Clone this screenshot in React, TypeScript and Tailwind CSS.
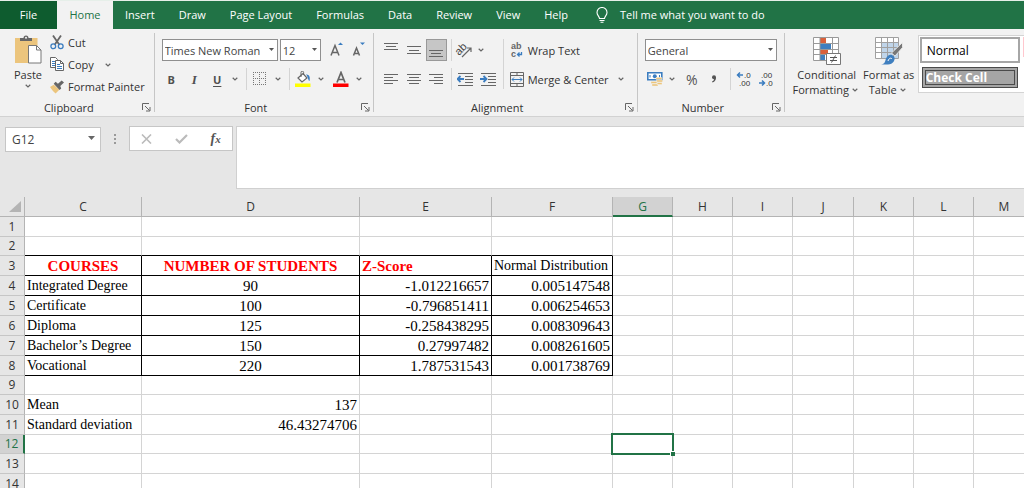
import React from "react";
import clsx from "clsx";

const tabs = ["Insert", "Draw", "Page Layout", "Formulas", "Data", "Review", "View", "Help"];

const columns = [
  { name: "C", width: 117 },
  { name: "D", width: 218 },
  { name: "E", width: 132 },
  { name: "F", width: 121 },
  { name: "G", width: 60 },
  { name: "H", width: 60 },
  { name: "I", width: 60 },
  { name: "J", width: 61 },
  { name: "K", width: 60 },
  { name: "L", width: 60 },
  { name: "M", width: 61 },
];

const cells: Record<number, string[]> = {
  3: ["COURSES", "NUMBER OF STUDENTS", "Z-Score", "Normal Distribution"],
  4: ["Integrated Degree", "90", "-1.012216657", "0.005147548"],
  5: ["Certificate", "100", "-0.796851411", "0.006254653"],
  6: ["Diploma", "125", "-0.258438295", "0.008309643"],
  7: ["Bachelor’s Degree", "150", "0.27997482", "0.008261605"],
  8: ["Vocational", "220", "1.787531543", "0.001738769"],
  10: ["Mean", "137"],
  11: ["Standard deviation", "46.43274706"],
};

const rows = Array.from({ length: 14 }, (_, i) => i + 1);
const shortRows = [2, 9, 12];

const Chevron = () => (
  <svg width="12" height="8" viewBox="0 0 12 8" fill="none" stroke="#666" strokeWidth="1.2" className="shrink-0">
    <path d="M3.700 2.800 6 5l2.300-2.200" />
  </svg>
);

const Sep = ({ className }: { className?: string }) => (
  <div className={clsx("w-px shrink-0 self-stretch bg-[#d4d4d4]", className)} />
);

const Tool = ({
  label,
  className,
  children,
}: {
  label: string;
  className?: string;
  children: React.ReactNode;
}) => (
  <button aria-label={label} className={clsx("flex h-[22px] shrink-0 items-center justify-center", className)}>
    {children}
  </button>
);

const Combo = ({ label, value, className }: { label: string; value: string; className: string }) => (
  <div className={clsx("relative h-[22px]", className)}>
    <select
      aria-label={label}
      className="h-full w-full appearance-none border border-[#8f8f8f] bg-white pl-[2px] text-[11px] text-[#444]"
    >
      <option>{value}</option>
    </select>
    <svg width="5" height="3" viewBox="0 0 5 3" className="pointer-events-none absolute top-[9px] right-1">
      <path d="M0 0h5L2.500 3z" fill="#555" />
    </svg>
  </div>
);

const Group = ({
  title,
  className,
  children,
}: {
  title: string;
  className?: string;
  children: React.ReactNode;
}) => (
  <section aria-label={title} className="relative flex shrink-0 flex-col">
    <div className={clsx("flex h-[70px] items-start", className)}>{children}</div>
    <div className="flex h-4 items-center pr-1">
      <span className="flex-1 pr-1 text-center">{title}</span>
      <button aria-label={`${title} settings`}>
        <svg width="9" height="9" viewBox="0 0 9 9" fill="none" stroke="#666">
          <path d="M.5 7V.5H7M3 3l4.500 4.500M8 4v4H4" />
        </svg>
      </button>
    </div>
    <div className="absolute top-1 right-0 bottom-1 w-px bg-[#c6c6c6]" />
  </section>
);

const Lines = ({ rows }: { rows: [number, number, number][] }) => (
  <svg width="16" height="16" viewBox="0 0 16 16" stroke="#666">
    {rows.map(([x1, x2, y]) => (
      <path key={y} d={`M${x1} ${y}.5H${x2}`} />
    ))}
  </svg>
);

const PasteIcon = () => (
  <svg width="28" height="29" viewBox="0 0 28 29">
    <path d="M1 3h22.500v25H1z" fill="#ecc57d" />
    <path d="M6 6V3h3.500a2.500 2.500 0 0 1 5 0H18v3z" fill="#666" />
    <circle cx="12" cy="2.800" r="1" fill="#f2f2f2" />
    <path d="M14.500 10.500h8l4.500 4.500v13H14.500z" fill="#fff" stroke="#777" />
    <path d="M22.500 10.500V15H27" fill="none" stroke="#777" />
  </svg>
);

const CutIcon = () => (
  <svg width="14" height="15" viewBox="0 0 14 15" fill="none">
    <path d="M3 .5 9.500 10M11 .5 4.500 10" stroke="#666" strokeWidth="1.800" />
    <circle cx="3.300" cy="11.300" r="2.400" stroke="#3b7dc0" strokeWidth="1.300" />
    <circle cx="10.700" cy="11.300" r="2.400" stroke="#3b7dc0" strokeWidth="1.300" />
  </svg>
);

const CopyIcon = () => (
  <svg width="14" height="15" viewBox="0 0 14 15" fill="#fff" stroke="#666">
    <path d="M.5.5h5l2 2v8h-7z" />
    <path d="M2 4.500h3M2 6.500h3M2 8.500h3" stroke="#3b7dc0" />
    <path d="M5.500 3.500h5l3 3v7h-8z" />
    <path d="M10.500 3.500v3h3" fill="none" />
    <path d="M7 7.500h3M7 9.500h5M7 11.500h5" stroke="#3b7dc0" />
  </svg>
);

const PainterIcon = () => (
  <svg width="14" height="14" viewBox="0 0 15 14">
    <path d="M0 7 4 4.500l6 5.500-4 4C4 12 2.500 11 0 7z" fill="#ecc57d" />
    <path d="m4 3.500 2-2 2.500 2L12.500 0 15 2.300 11 6l1 2.500-1.800 1.800z" fill="#666" />
  </svg>
);

const BordersIcon = () => (
  <svg width="14" height="14" viewBox="0 0 14 14" stroke="#777" strokeDasharray="1 1" fill="none">
    <path d="M0 .5h14M0 6.500h14M0 12.500h14M.5 0v14M6.500 0v14M12.500 0v14" />
  </svg>
);

const FillIcon = () => (
  <svg width="16" height="16" viewBox="0 0 16 16">
    <path d="m3 7 5-4.500 4 4.500-5 4z" fill="#fff" stroke="#666" strokeWidth="1.200" />
    <path d="M6 6V1.500a1.300 1.300 0 0 1 2.600 0V4" fill="none" stroke="#666" />
    <path d="M11 3.500c3 0 4.500 2 3.500 6.500-1.500-.5-1-3.500-3.500-6.500z" fill="#3b7dc0" />
    <path d="M0 12.500h15.500V16H0z" fill="#ffff00" />
  </svg>
);

const OrientationIcon = () => (
  <svg width="16" height="15" viewBox="0 0 16 15" className="overflow-visible">
    <text x="0" y="10" transform="rotate(-45 5 8)" fontSize="11" fill="#444" fontFamily="Liberation Sans">
      ab
    </text>
    <path d="M6 14 14.500 5.500M11 5h4v4" fill="none" stroke="#666" strokeWidth="1.200" />
  </svg>
);

const IndentIcon = ({ right }: { right?: boolean }) => (
  <svg width="16" height="14" viewBox="0 0 16 14" fill="none">
    <path d="M1 1.500h15M8 4.500h8M8 7.500h8M8 10.500h8M1 13.500h15" stroke="#666" />
    <path
      d={right ? "M0 7h6.500M3.500 4l3 3-3 3" : "M.5 7H7M3.500 4l-3 3 3 3"}
      stroke="#3b7dc0"
      strokeWidth="1.800"
    />
  </svg>
);

const WrapIcon = () => (
  <svg
    width="14"
    height="16"
    viewBox="0 0 14 16"
    fontFamily="Liberation Sans"
    fontSize="9"
    fontWeight="700"
    fill="#666"
    className="overflow-visible"
  >
    <text x="1" y="7">ab</text>
    <text x="1" y="15">c</text>
    <path d="M11.500 10v2.500H8M9.500 10.500l-2 2 2 2" fill="none" stroke="#3b7dc0" strokeWidth="1.300" />
  </svg>
);

const MergeIcon = () => (
  <svg width="14" height="15" viewBox="0 0 14 15" fill="none" stroke="#666">
    <path d="M.5.5h13v14H.5zM.5 3.500h13M.5 11.500h13M7 .5v3M7 11.500v3" />
    <path d="M2 7.500h10M4 5.500l-2 2 2 2M10 5.500l2 2-2 2" stroke="#3b7dc0" />
  </svg>
);

const MoneyIcon = () => (
  <svg width="16" height="16" viewBox="0 0 16 16">
    <path d="M.8 1.800h14v7H.8z" fill="#fff" stroke="#3b7dc0" strokeWidth="1.600" />
    <circle cx="7.800" cy="5.300" r="2" fill="#3b7dc0" />
    <path d="M3 4v2.500M12.500 4v2.500" stroke="#3b7dc0" />
    <path
      d="M4 10.500h6v2H4zM5 13h6v2H5zM9 6.500h6v2H9zM9.500 9h6v2h-6zM10 11.500h5v2h-5z"
      fill="#ecc57d"
      stroke="#f2f2f2"
      strokeWidth=".4"
    />
  </svg>
);

const DecimalIcon = ({ increase }: { increase?: boolean }) => (
  <svg
    width="16"
    height="16"
    viewBox="0 0 16 16"
    fontFamily="Liberation Sans"
    fontSize="8"
    fill="#333"
    className="overflow-visible"
  >
    <text x={increase ? 8 : 3} y="7">{increase ? ".0" : ".00"}</text>
    <text x={increase ? 3 : 8} y="15">{increase ? ".00" : ".0"}</text>
    <path
      d={increase ? "M7 4H1.500M4 1.500 1.500 4 4 6.500" : "M1 12h5.500M4 9.500 6.500 12 4 14.500"}
      fill="none"
      stroke="#3b7dc0"
      strokeWidth="1.500"
    />
  </svg>
);

const ConditionalIcon = () => (
  <svg width="28" height="29" viewBox="0 0 28 29">
    <path d="M.5.5h25v23H.5z" fill="#fff" />
    <path d="M7 1h6v5H7zM7 12h8v6H7z" fill="#d9603b" />
    <path d="M7 6h11v6H7zM7 18h5v5H7z" fill="#3f7fbf" />
    <path d="M.5.5h25v23H.5zM7 .5v23M19.500 .5v23M.5 6.500h25M.5 12.500h25M.5 17.500h25" fill="none" stroke="#999" />
    <path d="M13.500 16.500h14v11h-14z" fill="#fff" stroke="#777" />
    <path d="M17 20.500h7M17 23.500h7M22.500 18.500l-4 7" stroke="#555" fill="none" />
  </svg>
);

const TableIcon = () => (
  <svg width="28" height="28" viewBox="0 0 28 28">
    <path d="M.5.5h23v21H.5z" fill="#fff" />
    <path d="M6 5.500h17.500v16H6z" fill="#c0d5ea" />
    <path d="M.5.5h23v21H.5zM6.500.5v21M12.500.5v21M18.500.5v21M.5 5.500h23M.5 10.500h23M.5 15.500h23" fill="none" stroke="#a0a0a0" />
    <path d="M27.500 5.500v5L20 19l-3.500-3z" fill="#777" stroke="#f2f2f2" strokeWidth=".8" />
    <path d="M6 27.500c4-.5 4-3 5-6 1.500-4 5.500-5 8-2 2 3-1 8-6 8z" fill="#3f7fbf" />
    <path d="M13 24c1-3 3-3.500 4-2" stroke="#fff" fill="none" />
  </svg>
);

const Ribbon = () => (
  <div className="flex h-[88px] shrink-0 border-b border-[#d2d2d2] bg-[#f2f2f2] text-[11px] leading-[15px] text-[#333]">
    <Group title="Clipboard" className="gap-2 pt-[6px] pr-[10px] pl-[14px]">
      <button className="flex w-7 flex-col items-center">
        <PasteIcon />
        <span className="mt-[3px]">Paste</span>
        <Chevron />
      </button>
      <div className="flex flex-col items-start gap-[7px]">
        <button className="flex items-center gap-1">
          <CutIcon />
          Cut
        </button>
        <button className="flex items-center gap-1">
          <CopyIcon />
          Copy
          <span className="pl-1">
            <Chevron />
          </span>
        </button>
        <button className="flex items-center gap-1 whitespace-nowrap">
          <PainterIcon />
          Format Painter
        </button>
      </div>
    </Group>

    <Group title="Font" className="w-[219px] flex-col gap-[7px] pt-[10px]">
      <div className="flex w-full pl-[7px]">
        <Combo label="Font name" value="Times New Roman" className="w-[116px]" />
        <Combo label="Font size" value="12" className="ml-[2px] w-[41px]" />
        <Tool label="Increase font size" className="ml-1 w-[22px]">
          <svg width="16" height="16" viewBox="0 0 16 16">
            <path d="m3 13.500 4-10 4 10M4.500 10.500h5" fill="none" stroke="#666" strokeWidth="1.500" />
            <path d="m10 3 2.500-2.500L15 3z" fill="#3b7dc0" />
          </svg>
        </Tool>
        <Tool label="Decrease font size" className="w-[22px]">
          <svg width="16" height="16" viewBox="0 0 16 16">
            <path d="m3.500 13.500 3-7.500 3 7.500M4.500 11.500h4" fill="none" stroke="#666" strokeWidth="1.500" />
            <path d="m10 .5 2.500 2.500L15 .5z" fill="#3b7dc0" />
          </svg>
        </Tool>
      </div>
      <div className="flex items-center pl-[5px] text-[#505050]">
        <Tool label="Bold" className="w-[23px]">
          <b>B</b>
        </Tool>
        <Tool label="Italic" className="w-[23px]">
          <i className="font-['Liberation_Serif'] text-[13px] font-bold">I</i>
        </Tool>
        <Tool label="Underline" className="w-[23px]">
          <span className="font-bold underline underline-offset-2">U</span>
        </Tool>
        <Chevron />
        <Sep className="mx-[5px]" />
        <Tool label="Borders" className="w-4">
          <BordersIcon />
        </Tool>
        <span className="pl-1">
          <Chevron />
        </span>
        <Sep className="mx-[5px]" />
        <Tool label="Fill color" className="w-4">
          <FillIcon />
        </Tool>
        <span className="pl-1">
          <Chevron />
        </span>
        <Tool label="Font color" className="ml-[6px] w-4">
          <svg width="16" height="16" viewBox="0 0 16 16">
            <path d="m4 11.500 4-10 4 10M5.500 8.500h5" fill="none" stroke="#666" strokeWidth="1.700" />
            <path d="M0 12.500h15.500V16H0z" fill="#f00" />
          </svg>
        </Tool>
        <span className="pl-1">
          <Chevron />
        </span>
      </div>
    </Group>

    <Group title="Alignment" className="w-[264px] pt-[10px] pl-[6px]">
      <div className="flex flex-col gap-[7px]">
        <div className="flex items-center">
          <Tool label="Top align" className="w-[23px]">
            <Lines rows={[[1, 15, 1], [3, 13, 4], [1, 15, 7]]} />
          </Tool>
          <Tool label="Middle align" className="w-[23px]">
            <Lines rows={[[1, 15, 4], [3, 13, 8], [1, 15, 11]]} />
          </Tool>
          <Tool label="Bottom align" className="w-[21px] border border-[#999] bg-[#c6c6c6]">
            <Lines rows={[[1, 15, 8], [3, 13, 11], [1, 15, 14]]} />
          </Tool>
          <Sep className="mr-[2px] ml-1" />
          <Tool label="Orientation" className="w-[21px]">
            <OrientationIcon />
          </Tool>
          <Chevron />
        </div>
        <div className="flex items-center">
          <Tool label="Align left" className="w-[23px]">
            <Lines rows={[[1, 15, 3], [1, 10, 6], [1, 15, 9], [1, 10, 12]]} />
          </Tool>
          <Tool label="Center" className="w-[23px]">
            <Lines rows={[[1, 15, 3], [3, 13, 6], [1, 15, 9], [3, 13, 12]]} />
          </Tool>
          <Tool label="Align right" className="w-[21px]">
            <Lines rows={[[1, 15, 3], [6, 15, 6], [1, 15, 9], [6, 15, 12]]} />
          </Tool>
          <Sep className="mr-[2px] ml-1" />
          <Tool label="Decrease indent" className="w-[23px]">
            <IndentIcon />
          </Tool>
          <Tool label="Increase indent" className="w-[23px]">
            <IndentIcon right />
          </Tool>
        </div>
      </div>
      <Sep className="mr-[6px] mb-[10px] ml-[3px]" />
      <div className="flex flex-col gap-[7px]">
        <button className="flex h-[22px] items-center gap-1">
          <WrapIcon />
          Wrap Text
        </button>
        <button className="flex h-[22px] items-center gap-1 whitespace-nowrap">
          <MergeIcon />
          Merge &amp; Center
          <span className="pl-[2px]">
            <Chevron />
          </span>
        </button>
      </div>
    </Group>

    <Group title="Number" className="w-[147px] flex-col gap-[7px] pt-[10px] pl-[7px]">
      <Combo label="Number format" value="General" className="w-[132px]" />
      <div className="flex items-center pl-[2px]">
        <Tool label="Accounting format" className="w-4">
          <MoneyIcon />
        </Tool>
        <span className="pl-[3px]">
          <Chevron />
        </span>
        <Tool label="Percent style" className="ml-[3px] w-[22px]">
          <span className="text-[14px] text-[#555]">%</span>
        </Tool>
        <Tool label="Comma style" className="w-[22px]">
          <svg width="6" height="8" viewBox="0 0 6 8" fill="#555">
            <circle cx="3" cy="2.300" r="2" />
            <path d="M5 2.500C5 5 4 6.500 1.500 7.500L1 6.500c1.500-.5 2-1.500 2-2.500z" />
          </svg>
        </Tool>
        <Sep className="mx-[5px]" />
        <Tool label="Increase decimal" className="w-4">
          <DecimalIcon increase />
        </Tool>
        <Tool label="Decrease decimal" className="ml-[6px] w-4">
          <DecimalIcon />
        </Tool>
      </div>
    </Group>

    <section aria-label="Styles" className="flex min-w-0 flex-1 items-start overflow-hidden pt-[6px] pl-2">
      <button className="flex w-[68px] shrink-0 flex-col items-center whitespace-nowrap">
        <span className="flex h-8 items-center">
          <ConditionalIcon />
        </span>
        <span>Conditional</span>
        <span className="flex items-center">
          Formatting <Chevron />
        </span>
      </button>
      <button className="flex w-14 shrink-0 flex-col items-center whitespace-nowrap">
        <span className="flex h-8 items-center">
          <TableIcon />
        </span>
        <span>Format as</span>
        <span className="flex items-center">
          Table <Chevron />
        </span>
      </button>
      <div className="ml-px flex h-[58px] min-w-0 flex-1 border border-r-0 border-[#d4d4d4] bg-white pt-px text-[12px]">
        <div className="flex min-w-0 flex-1 flex-col gap-1 pl-px">
          <button className="h-[26px] border-2 border-[#a6a6a6] bg-white pl-[5px] text-left text-black">Normal</button>
          <button className="mx-[2px] h-[21px] border-4 border-double border-[#4a4a4a] bg-[#a5a5a5] text-left leading-[12px] font-bold text-white">
            Check Cell
          </button>
        </div>
        <div className="ml-[3px] h-5 w-px self-start bg-[#ffc7ce]" />
      </div>
    </section>
  </div>
);

const FormulaBar = () => (
  <div className="flex h-20 shrink-0 items-start pt-[9px] pl-[5px]">
    <div className="relative h-[25px] w-24">
      <input
        aria-label="Name box"
        defaultValue="G12"
        className="h-full w-full border border-[#c6c6c6] bg-white px-[6px] text-[12px] text-[#444]"
      />
      <svg width="7" height="4" viewBox="0 0 7 4" className="pointer-events-none absolute top-[10px] right-[6px]">
        <path d="M0 0h7L3.500 4z" fill="#666" />
      </svg>
    </div>
    <svg width="28" height="25" viewBox="0 0 28 25" fill="#999">
      <path d="M13 8h2v2h-2zM13 12h2v2h-2zM13 16h2v2h-2z" />
    </svg>
    <div className="flex h-[25px] w-[104px] items-center justify-around border border-[#c6c6c6] bg-white">
      <button aria-label="Cancel">
        <svg width="11" height="10" viewBox="0 0 11 10" stroke="#bbb" strokeWidth="1.600">
          <path d="m1 .5 9 9M10 .5l-9 9" />
        </svg>
      </button>
      <button aria-label="Enter">
        <svg width="13" height="10" viewBox="0 0 13 10" fill="none" stroke="#bbb" strokeWidth="2.200">
          <path d="m1 5 3.500 3.500L12 1" />
        </svg>
      </button>
      <button
        aria-label="Insert function"
        className="font-['Liberation_Serif'] text-[14px] leading-4 font-bold text-[#555] italic"
      >
        f<span className="text-[11px]">x</span>
      </button>
    </div>
    <textarea
      aria-label="Formula"
      className="ml-[3px] h-[63px] min-w-0 flex-1 resize-none border border-r-0 border-[#d0d0d0] bg-white"
    />
  </div>
);

const Sheet = () => (
  <div className="min-h-0 flex-1 overflow-hidden bg-white">
    <table className="w-max table-fixed border-separate border-spacing-0">
      <colgroup>
        <col style={{ width: 25 }} />
        {columns.map(({ name, width }) => (
          <col key={name} style={{ width }} />
        ))}
      </colgroup>
      <thead>
        <tr className="h-5 bg-[#e6e6e6] text-[12px] leading-[18px] text-[#333]">
          <th aria-label="Select all" className="border-r border-b border-[#b4b4b4] p-0">
            <svg width="12" height="11" viewBox="0 0 12 11" className="ml-[9px]">
              <path d="M12 0v11H0z" fill="#b4b4b4" />
            </svg>
          </th>
          {columns.map(({ name }) => (
            <th
              key={name}
              className={clsx(
                "border-r p-0 font-normal",
                name === "G"
                  ? "border-b-2 border-r-[#b4b4b4] border-b-[#217346] bg-[#d2d2d2] leading-[17px] text-[#217346]"
                  : "border-b border-[#b4b4b4]"
              )}
            >
              {name}
            </th>
          ))}
        </tr>
      </thead>
      <tbody>
        {rows.map((row) => (
          <tr key={row} className={shortRows.includes(row) ? "h-[19px]" : "h-5"}>
            <th
              className={clsx(
                "border-b border-b-[#c6c6c6] p-0 text-[12px] leading-[18px] font-normal",
                row === 12
                  ? "border-r-2 border-r-[#217346] bg-[#d2d2d2] text-[#217346]"
                  : "border-r border-r-[#b4b4b4] bg-[#e6e6e6] text-[#333]"
              )}
            >
              {row}
            </th>
            {columns.map(({ name }, i) => {
              const framed = i < 4 && row >= 3 && row <= 8;
              const text = cells[row]?.[i];
              const number = i > 0 && row !== 3;
              return (
                <td
                  key={name}
                  className={clsx(
                    "border-r border-b px-[2px] py-0 font-['Liberation_Serif',serif] leading-[18px] whitespace-nowrap text-black",
                    framed ? "border-r-black" : "border-r-[#d4d4d4]",
                    framed || (row === 2 && i < 4) ? "border-b-black" : "border-b-[#d4d4d4]",
                    number || (row === 3 && i < 3) ? "text-[15px]" : "text-[14px]",
                    row === 3 && i < 3 && "font-bold !text-[#ff0000]",
                    (row === 3 && i < 2) || (framed && i === 1) ? "text-center" : number ? "text-right" : "text-left",
                    name === "G" && row === 12 && "relative"
                  )}
                >
                  {text}
                  {name === "G" && row === 12 && (
                    <div className="absolute -inset-[2px] border-2 border-[#217346]">
                      <div className="absolute -right-[3px] -bottom-[3px] h-[5px] w-[5px] border-t border-l border-white bg-[#217346]" />
                    </div>
                  )}
                </td>
              );
            })}
          </tr>
        ))}
      </tbody>
    </table>
  </div>
);

const App = () => (
  <div className="flex h-screen flex-col overflow-hidden bg-[#e6e6e6] font-['Open_Sans','Noto_Sans',sans-serif]">
    <nav className="flex h-[29px] shrink-0 items-stretch border-t border-[#e6efe9] bg-[#217346] text-[11px] whitespace-nowrap text-white">
      <button className="w-[57px] bg-[#0e5c2f]">File</button>
      <button className="w-14 bg-[#f2f2f2] text-[#217346]">Home</button>
      {tabs.map((tab) => (
        <button key={tab} className="px-3">
          {tab}
        </button>
      ))}
      <button className="flex items-center gap-3 pl-4">
        <svg width="12" height="16" viewBox="0 0 12 16" fill="none" stroke="#fff" strokeWidth="1.100">
          <path d="M3.500 11.500c0-2-2.500-3-2.500-6a5 5 0 0 1 10 0c0 3-2.500 4-2.500 6zM3.500 13.500h5M4.500 15.300h3" />
        </svg>
        Tell me what you want to do
      </button>
    </nav>
    <Ribbon />
    <FormulaBar />
    <Sheet />
  </div>
);

export default App;
